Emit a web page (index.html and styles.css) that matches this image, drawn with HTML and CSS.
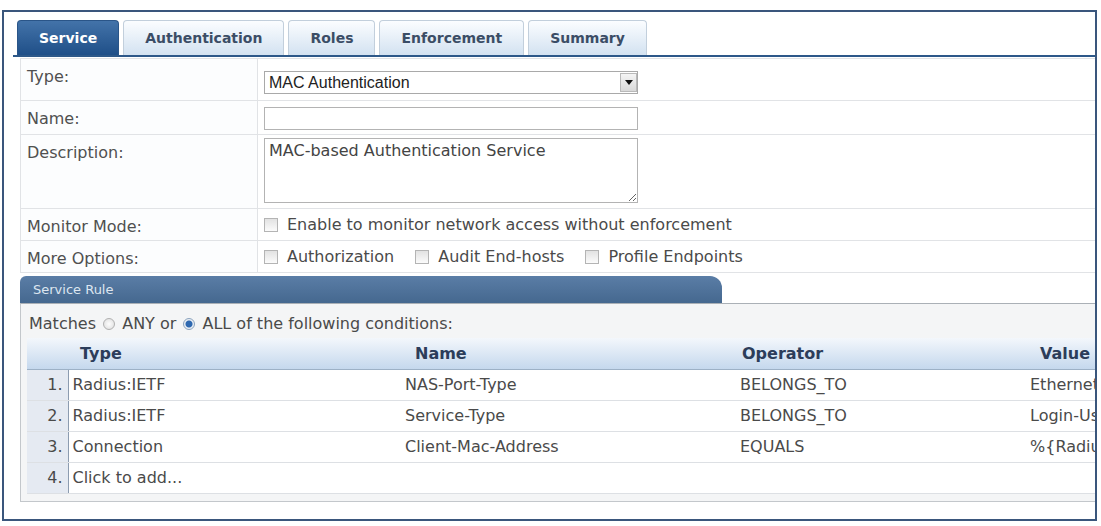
FILE: index.html
```html
<!DOCTYPE html>
<html lang="en">
<head>
    <meta charset="UTF-8">
    <meta name="viewport" content="width=device-width, initial-scale=1.0">
    <title>Services - Add - Policy Manager</title>
    <link rel="stylesheet" href="styles.css">
</head>
<body>

    <div class="frame">
        <div class="tabs">
            <div class="tab active">Service</div>
            <div class="tab">Authentication</div>
            <div class="tab">Roles</div>
            <div class="tab">Enforcement</div>
            <div class="tab">Summary</div>
        </div>

        <div class="tab-body">
            <table class="form-table">
                <tr class="row-type">
                    <td class="label">Type:</td>
                    <td>
                        <div class="select-wrap">
                            <select class="select">
                                <option>MAC Authentication</option>
                            </select>
                            <span class="select-btn">
                                <svg width="8" height="5" viewBox="0 0 8 5"><path d="M0 0h8L4 5z" fill="#111"/></svg>
                            </span>
                        </div>
                    </td>
                </tr>
                <tr class="row-name">
                    <td class="label">Name:</td>
                    <td><input type="text" class="text-input"></td>
                </tr>
                <tr class="row-desc">
                    <td class="label">Description:</td>
                    <td><textarea class="text-area">MAC-based Authentication Service</textarea></td>
                </tr>
                <tr class="row-check">
                    <td class="label">Monitor Mode:</td>
                    <td>
                        <label class="check"><input type="checkbox">Enable to monitor network access without enforcement</label>
                    </td>
                </tr>
                <tr class="row-check">
                    <td class="label">More Options:</td>
                    <td>
                        <label class="check"><input type="checkbox">Authorization</label>
                        <label class="check"><input type="checkbox">Audit End-hosts</label>
                        <label class="check"><input type="checkbox">Profile Endpoints</label>
                    </td>
                </tr>
            </table>

            <div class="rule-panel">
                <div class="rule-head">Service Rule</div>
                <div class="rule-box">
                    <div class="matches">
                        Matches
                        <input type="radio" name="match"> ANY or
                        <input type="radio" name="match" checked> ALL of the following conditions:
                    </div>

                    <table class="cond-table">
                        <colgroup>
                            <col class="c-num">
                            <col class="c-type">
                            <col class="c-name">
                            <col class="c-op">
                            <col class="c-val">
                        </colgroup>
                        <thead>
                            <tr>
                                <th></th>
                                <th class="h-type">Type</th>
                                <th class="h-name">Name</th>
                                <th class="h-op">Operator</th>
                                <th class="h-val">Value</th>
                            </tr>
                        </thead>
                        <tbody>
                            <tr>
                                <td class="num">1.</td>
                                <td>Radius:IETF</td>
                                <td>NAS-Port-Type</td>
                                <td>BELONGS_TO</td>
                                <td>Ethernet (15), Wireless-802.11 (19)</td>
                            </tr>
                            <tr>
                                <td class="num">2.</td>
                                <td>Radius:IETF</td>
                                <td>Service-Type</td>
                                <td>BELONGS_TO</td>
                                <td>Login-User (1), Call-Check (10)</td>
                            </tr>
                            <tr>
                                <td class="num">3.</td>
                                <td>Connection</td>
                                <td>Client-Mac-Address</td>
                                <td>EQUALS</td>
                                <td>%{Radius:IETF:User-Name}</td>
                            </tr>
                            <tr>
                                <td class="num">4.</td>
                                <td>Click to add...</td>
                                <td></td>
                                <td></td>
                                <td></td>
                            </tr>
                        </tbody>
                    </table>
                </div>
            </div>
        </div>
    </div>

</body>
</html>
```

FILE: styles.css
```css
* {
    margin: 0;
    padding: 0;
    box-sizing: border-box;
}

body {
    background: #fff;
    color: #4a4a4a;
    font-family: "DejaVu Sans", Verdana, sans-serif;
    font-size: 16px;
}

.frame {
    margin: 10px 4px 0 2px;
    height: 511px;
    border: 2px solid #3a567c;
    padding-top: 8px;
    overflow: hidden;
}

/* tabs */
.tabs {
    display: flex;
    gap: 4px;
    margin-left: 9px;
    padding-left: 4px;
    border-bottom: 2px solid #2d5889;
}

.tab {
    height: 35px;
    padding: 0 21px;
    display: flex;
    align-items: center;
    font-size: 14px;
    font-weight: bold;
    color: #3b4d66;
    background: linear-gradient(#fbfdff, #d3e2f1);
    border: 1px solid #c2cfdc;
    border-bottom: none;
    border-radius: 4px 4px 0 0;
}

.tab.active {
    color: #fff;
    background: linear-gradient(#4373a9, #1f4f88);
    border-color: #2a5588;
}

.tab-body {
    padding-left: 16px;
}

/* service form */
.form-table {
    width: 1100px;
    margin-top: 1px;
    border-collapse: collapse;
}

.form-table td {
    border: 1px solid #e1e3e6;
    vertical-align: top;
    padding: 6px 6px 0;
    background: #fff;
}

.form-table td.label {
    width: 237px;
    padding: 8px 0 0 6px;
    color: #505050;
    background: #fcfdfe;
}

.row-type td { height: 42px; }
.row-type td:last-child { padding-top: 12px; }
.row-name td { height: 34px; }
.row-desc td { height: 74px; }
.row-desc td:last-child { padding-top: 3px; }
.row-check td { height: 32px; }

.select-wrap {
    position: relative;
    width: 374px;
    height: 23px;
}

.select {
    appearance: none;
    width: 374px;
    height: 23px;
    padding-left: 4px;
    border: 1px solid #a9a9a9;
    background: #fff;
    color: #222;
    font-family: "Liberation Sans", Arial, sans-serif;
    font-size: 16px;
}

.select-btn {
    position: absolute;
    right: 1px;
    top: 2px;
    width: 17px;
    height: 19px;
    display: flex;
    align-items: center;
    justify-content: center;
    border: 1px solid #b9b9b9;
    background: linear-gradient(#f4f4f4, #d9d9d9);
}

.text-input {
    width: 374px;
    height: 23px;
    border: 1px solid #b3b3b3;
}

.text-area {
    width: 374px;
    height: 65px;
    padding: 2px 4px;
    border: 1px solid #b3b3b3;
    font-family: "DejaVu Sans", Verdana, sans-serif;
    font-size: 16px;
    line-height: 20px;
    color: #444;
}

.check {
    display: inline-flex;
    align-items: center;
    margin-right: 16px;
    line-height: 20px;
}

.check input,
.matches input {
    appearance: none;
    flex: none;
}

.check input {
    width: 14px;
    height: 14px;
    margin-right: 9px;
    border: 1px solid #b4b4b4;
    background: linear-gradient(#e2e2e2, #fbfbfb);
}

/* service rule panel */
.rule-panel {
    margin-top: 3px;
}

.rule-head {
    width: 702px;
    height: 27px;
    padding-left: 13px;
    line-height: 28px;
    font-size: 13px;
    color: #dde6f0;
    background: linear-gradient(#5a7da6, #45688f);
    border-radius: 6px 12px 0 0;
}

.rule-box {
    width: 1100px;
    padding: 10px 0 7px 6px;
    border: 1px solid #c3c7cb;
    border-top-color: #aab0b6;
    background: #f4f5f6;
}

.matches {
    height: 20px;
    margin-bottom: 4px;
    padding-left: 2px;
    line-height: 20px;
}

.matches input {
    width: 12px;
    height: 12px;
    margin: 0 2px;
    vertical-align: -1px;
    border-radius: 50%;
    border: 1px solid #b0b0b0;
    background: radial-gradient(circle, #fdfdfd, #dcdcdc);
}

.matches input:checked {
    border-color: #8aa2bd;
    background: radial-gradient(circle, #2e68b0 0, #2e68b0 3px, #e9eef4 4px);
}

.cond-table {
    width: 1199px;
    table-layout: fixed;
    border-collapse: collapse;
}

.c-num { width: 41px; }
.c-type { width: 333px; }
.c-name { width: 335px; }
.c-op { width: 290px; }
.c-val { width: 200px; }

.cond-table th {
    height: 31px;
    text-align: left;
    font-weight: bold;
    color: #2c3d5a;
    background: linear-gradient(#f3f7fc, #c5d8ed);
    border-bottom: 1px solid #9db1c6;
}

.h-type { padding-left: 12px; }
.h-name { padding-left: 14px; }
.h-op { padding-left: 6px; }
.h-val { padding-left: 14px; }

.cond-table td {
    height: 31px;
    padding-left: 4px;
    white-space: nowrap;
    overflow: hidden;
    background: #fff;
    border-bottom: 1px solid #dde0e4;
}

.cond-table td.num {
    padding: 0 5px 0 0;
    text-align: right;
    background: #e5eaf2;
    border-right: 1px solid #8c9cb0;
}
```
